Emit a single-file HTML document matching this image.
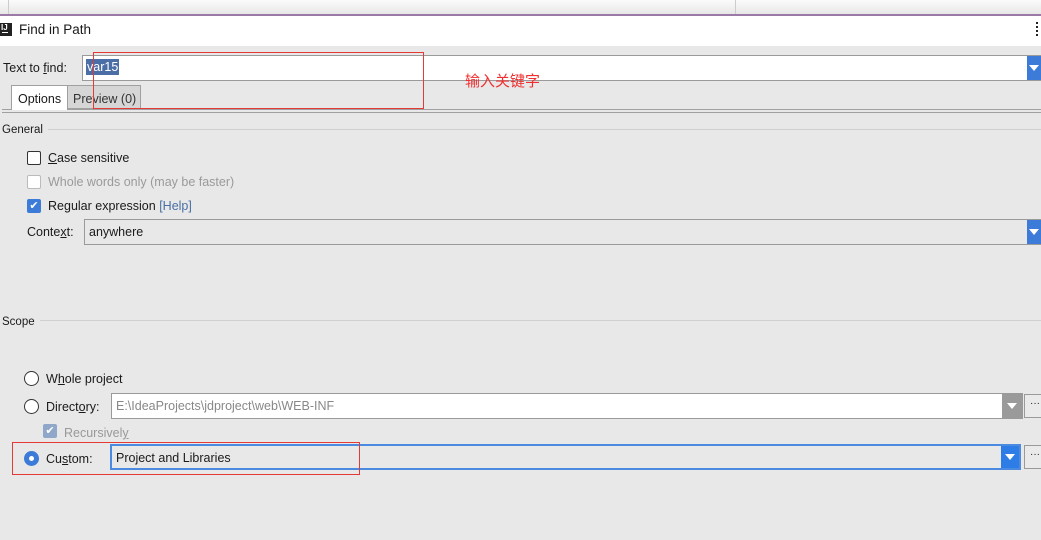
<!DOCTYPE html>
<html><head><meta charset="utf-8"><style>
*{margin:0;padding:0;box-sizing:border-box}
body{width:1041px;height:540px;overflow:hidden;background:#e8e8e8;font-family:"Liberation Sans","Noto Sans CJK SC",sans-serif;font-size:12.5px;color:#1a1a1a;position:relative}
.a{position:absolute}
.field{position:absolute;border:1px solid #9a9a9a;background:#fff}
.dd{position:absolute;top:0;bottom:0;right:0;background:#3d7bd8}
.dd:after{content:"";position:absolute;left:50%;top:50%;margin:-3px 0 0 -5px;border-left:5px solid transparent;border-right:5px solid transparent;border-top:6px solid #fff}
.cb{position:absolute;width:14px;height:14px;border:1px solid #333;background:#fff;border-radius:2px}
.rb{position:absolute;width:15px;height:15px;border:1px solid #333;background:#fff;border-radius:50%}
.sep{position:absolute;height:1px;background:#cfcfcf}
.btn{position:absolute;width:22px;height:24px;border:1px solid #9a9a9a;background:#eaeaea;font-size:10px;text-align:center;line-height:18px}
</style></head><body>
<div class="a" style="left:0;top:0;width:1041px;height:15px;background:linear-gradient(#fbfbfb,#e6e6e6)"></div>
<div class="a" style="left:8px;top:0;width:1px;height:15px;background:#ccc"></div>
<div class="a" style="left:735px;top:0;width:1px;height:15px;background:#ccc"></div>
<div class="a" style="left:0;top:14px;width:1041px;height:2px;background:#9c7aa8"></div>
<div class="a" style="left:0;top:16px;width:1041px;height:30px;background:#fff"></div>
<div class="a" style="left:0;top:23px;width:12px;height:13px;background:#222;color:#fff;font-size:8px;font-weight:bold;line-height:9px;padding-left:1px">IJ</div>
<div class="a" style="left:2px;top:32px;width:6px;height:1px;background:#fff"></div>
<div class="a" style="left:19px;top:22px;font-size:13.5px">Find in Path</div>
<div class="a" style="left:1036px;top:22px;width:2px;height:14px;border-left:2px dotted #222"></div>

<div class="a" style="left:3px;top:61px">Text to <u>f</u>ind:</div>
<div class="field" style="left:82px;top:55px;width:960px;height:26px"><div class="dd" style="width:14px"></div></div>
<div class="a" style="left:86px;top:59px;background:#4c6ea6;color:#fff;padding:0 1px;line-height:16px">var15</div>

<div class="a" style="left:2px;top:109px;width:1039px;height:1px;background:#a0a0a0"></div>
<div class="a" style="left:2px;top:112px;width:1039px;height:1px;background:#a0a0a0"></div>
<div class="a" style="left:11px;top:85px;width:57px;height:25px;background:#fff;border:1px solid #a0a0a0;border-bottom:none;padding:6px 0 0 6px">Options</div>
<div class="a" style="left:67px;top:85px;width:74px;height:24px;background:#d6d6d6;border:1px solid #a0a0a0;padding:6px 0 0 5px;color:#333">Preview (0)</div>

<div class="a" style="left:2px;top:124px;font-size:11.5px">General</div>
<div class="sep" style="left:48px;top:129px;width:993px"></div>
<div class="cb" style="left:27px;top:151px"></div><div class="a" style="left:48px;top:151px"><u>C</u>ase sensitive</div>
<div class="cb" style="left:27px;top:175px;border-color:#bbb"></div><div class="a" style="left:48px;top:175px;color:#9a9a9a">Whole words only (may be faster)</div>
<div class="cb" style="left:27px;top:199px;background:#3d7bd8;border-color:#3d7bd8;color:#fff;font-size:11px;line-height:12px;text-align:center">✔</div><div class="a" style="left:48px;top:199px">Re<u>g</u>ular expression <span style="color:#4a6fa5">[Help]</span></div>
<div class="a" style="left:27px;top:225px">Conte<u>x</u>t:</div>
<div class="field" style="left:84px;top:219px;width:958px;height:26px;background:#e8e8e8"><div class="dd" style="width:14px"></div></div>
<div class="a" style="left:89px;top:225px">anywhere</div>

<div class="a" style="left:2px;top:316px;font-size:11.5px">Scope</div>
<div class="sep" style="left:40px;top:320px;width:1001px"></div>
<div class="rb" style="left:24px;top:371px"></div><div class="a" style="left:46px;top:372px">W<u>h</u>ole project</div>
<div class="rb" style="left:24px;top:399px"></div><div class="a" style="left:46px;top:400px">Direct<u>o</u>ry:</div>
<div class="field" style="left:111px;top:393px;width:912px;height:26px"><div class="dd" style="width:20px;background:#9a9a9a"></div></div>
<div class="a" style="left:116px;top:399px;color:#888">E:\IdeaProjects\jdproject\web\WEB-INF</div>
<div class="btn" style="left:1024px;top:394px">···</div>
<div class="cb" style="left:43px;top:424px;background:#8fa7c9;border-color:#8fa7c9;color:#fff;font-size:11px;line-height:12px;text-align:center">✔</div><div class="a" style="left:64px;top:426px;color:#999">Recursivel<u>y</u></div>
<div class="rb" style="left:24px;top:451px;background:#3d7bd8;border-color:#3d7bd8"><div class="a" style="left:4px;top:4px;width:5px;height:5px;border-radius:50%;background:#fff"></div></div>
<div class="a" style="left:46px;top:452px">Cu<u>s</u>tom:</div>
<div class="field" style="left:110px;top:444px;width:911px;height:26px;border:2px solid #4a8ae0;background:#e8e8e8"><div class="dd" style="width:18px;background:#2e7de6"></div></div>
<div class="a" style="left:116px;top:451px">Project and Libraries</div>
<div class="btn" style="left:1024px;top:445px">···</div>

<div class="a" style="left:93px;top:52px;width:331px;height:57px;border:1px solid #e53935"></div>
<div class="a" style="left:12px;top:442px;width:348px;height:33px;border:1px solid #e53935"></div>
<div class="a" style="left:465px;top:70px;color:#f03030;font-size:15px">输入关键字</div>
</body></html>
